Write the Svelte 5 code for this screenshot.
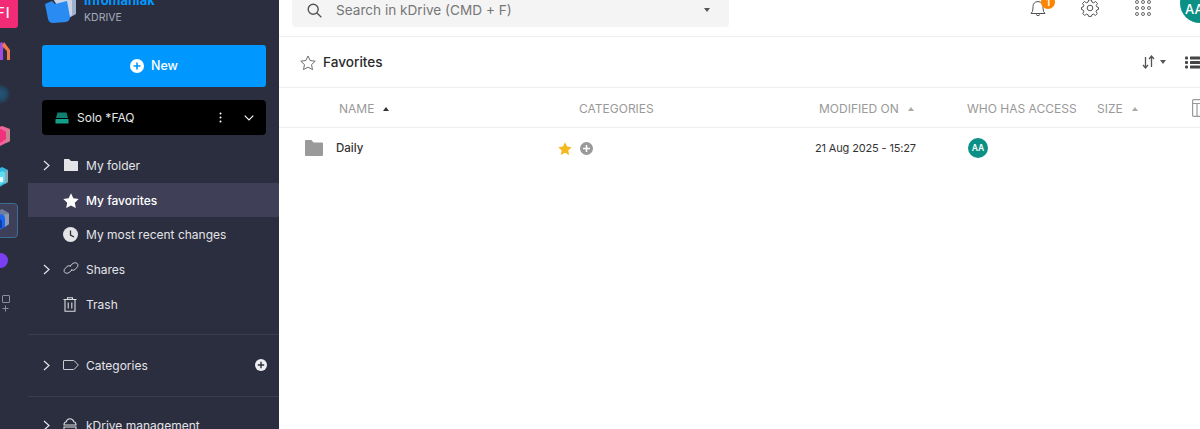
<script>
  const chevron = 'M1 1l5 4.5L1 10';
</script>

<div class="app">
  <nav class="rail">
    <div class="slot"><div class="tile">FI</div></div>
    <div class="slot">
      <svg class="home" width="24" height="24" viewBox="0 0 24 24">
        <path d="M3 7 L13 2 L15 5 L14 10 V20 H3Z" fill="#a04be0"/>
        <path d="M15 2 L21 10 V20 H18 V11 L13 6Z" fill="#f07a4b"/>
      </svg>
    </div>
    <div class="slot"><span class="globe"></span></div>
    <div class="slot">
      <svg width="20" height="20" viewBox="0 0 20 20">
        <path d="M-8 5 L4 0 L12 3 V15 L2 20 L-8 15Z" fill="#f2659a"/>
        <path d="M-8 6 L3 3 L8 6 V13 L2 17 L-8 13Z" fill="#f0317c"/>
        <path d="M8 3 L12 4 V15 L8 17Z" fill="#c9858f"/>
      </svg>
    </div>
    <div class="slot">
      <svg width="20" height="22" viewBox="0 0 20 22">
        <path d="M-8 6 L4 0 L10 3 V15 L0 21 L-8 16Z" fill="#34b8e0"/>
        <path d="M-8 8 L5 4 L7 6 V15 L0 19 L-8 15Z" fill="#5cdcf0"/>
        <path d="M1 10 H5 V15 H1Z" fill="#e8fbff"/>
        <path d="M7 4 L10 4 V15 L7 17Z" fill="#87a9b3"/>
      </svg>
    </div>
    <div class="slot">
      <div class="active-tile">
        <svg width="20" height="22" viewBox="0 0 20 22">
          <path d="M-8 6 L3 0 L10 4 V15 L0 21 L-8 16Z" fill="#6f7d9f"/>
          <path d="M-8 9 L3 5 L6 9 V18 L0 21 L-8 18Z" fill="#1b64f2"/>
          <path d="M-4 12 L1 10 L3 12 V19 H-4Z" fill="#0f3ea8"/>
          <path d="M6 5 L10 5 V15 L6 18Z" fill="#8d9ab5"/>
        </svg>
      </div>
    </div>
    <div class="slot purple-slot"><span class="purple"></span></div>
    <div class="adder">
      <span class="square"></span>
      <svg width="7" height="7" viewBox="0 0 7 7"><path d="M3.5 0.5V6.5M0.5 3.5H6.5" stroke="#8a8f9f" stroke-width="1"/></svg>
    </div>
  </nav>

  <aside class="side">
    <div class="brand">
      <svg class="brand-logo" width="31" height="34" viewBox="0 0 31 34">
        <path d="M9 6 L25 2 L31 5 V24 L24 28Z" fill="#9fb0cf"/>
        <path d="M7 7 L22 3 L27 5 V25 L20 29Z" fill="#cbd4e6"/>
        <path d="M0 14 L7 11 L10 14 L22 11 L25 27 Q25 31 21 32 L8 33 Q4 33 3 29Z" fill="#2a8bf2"/>
      </svg>
      <div class="brand-text">
        <div class="brand-name">Infomaniak</div>
        <div class="brand-sub">KDRIVE</div>
      </div>
    </div>

    <button class="new">
      <svg width="14" height="14" viewBox="0 0 14 14"><circle cx="7" cy="7" r="7" fill="#fff"/><path d="M7 3.5v7M3.5 7h7" stroke="#0098ff" stroke-width="1.6"/></svg>
      <span>New</span>
    </button>

    <div class="drive">
      <svg width="14" height="12" viewBox="0 0 14 12">
        <path d="M2.5 0.5H11.5L13 6H1Z" fill="#0f7f6f"/>
        <path d="M0.5 7H13.5V11.5H0.5Z" fill="#13a08b"/>
      </svg>
      <span class="drive-name">Solo *FAQ</span>
      <svg class="dots" width="3" height="11" viewBox="0 0 3 11" fill="#fff"><circle cx="1.5" cy="1.5" r="1"/><circle cx="1.5" cy="5.5" r="1"/><circle cx="1.5" cy="9.5" r="1"/></svg>
      <svg width="10" height="6" viewBox="0 0 10 6" fill="none"><path d="M0.7 0.7 5 5 9.3 0.7" stroke="#fff" stroke-width="1.1"/></svg>
    </div>

    <ul class="tree">
      <li class="item">
        <svg class="chev" width="7" height="11" viewBox="0 0 7 11" fill="none"><path d={chevron} stroke="#e6e6ea" stroke-width="1.2"/></svg>
        <svg class="ic" width="16" height="14" viewBox="0 0 16 14"><path d="M1 1.5Q1 1 1.5 1H6L8 3H14.5Q15 3 15 3.5V13H1Z" fill="#e4e4e7"/></svg>
        <span>My folder</span>
      </li>
      <li class="item on">
        <svg class="ic" width="16" height="15" viewBox="0 0 24 23"><path d="M12 0.5l3.6 7.6 8.2 1-6 5.8 1.6 8.2-7.4-4.1-7.4 4.1 1.6-8.2-6-5.8 8.2-1z" fill="#fff"/></svg>
        <span>My favorites</span>
      </li>
      <li class="item">
        <svg class="ic" width="15" height="15" viewBox="0 0 15 15"><circle cx="7.5" cy="7.5" r="7.5" fill="#e4e4e7"/><path d="M7.5 3.5V8L11 10" stroke="#2b2e3f" stroke-width="1.3" fill="none"/></svg>
        <span>My most recent changes</span>
      </li>
      <li class="item">
        <svg class="chev" width="7" height="11" viewBox="0 0 7 11" fill="none"><path d={chevron} stroke="#e6e6ea" stroke-width="1.2"/></svg>
        <svg class="ic" width="16" height="12" viewBox="0 0 16 12" fill="none" stroke="#c9cad0" stroke-width="1"><path d="M7 4 10 1.4Q11.6 0.2 13.6 1 15.6 2.4 14.7 4.5L12 7.6Q10 9 8.2 7.6"/><path d="M9 8 6 10.6Q4.4 11.8 2.4 11 0.4 9.6 1.3 7.5L4 4.4Q6 3 7.8 4.4"/></svg>
        <span>Shares</span>
      </li>
      <li class="item">
        <svg class="ic" width="14" height="15" viewBox="0 0 14 15" fill="none" stroke="#dcdce0" stroke-width="1.1"><path d="M0.5 2.5H13.5M4.5 2.5V0.8H9.5V2.5M2 2.5V14.2H12V2.5M5.2 5.5V11.5M8.8 5.5V11.5"/></svg>
        <span>Trash</span>
      </li>
    </ul>

    <div class="section">
      <div class="item">
        <svg class="chev" width="7" height="11" viewBox="0 0 7 11" fill="none"><path d={chevron} stroke="#e6e6ea" stroke-width="1.2"/></svg>
        <svg class="ic tag" width="16" height="10" viewBox="0 0 16 10" fill="none" stroke="#c9cad0" stroke-width="1"><path d="M0.5 1Q0.5 0.5 1 0.5H10.5Q11 0.5 11.5 1L15.3 5 11.5 9Q11 9.5 10.5 9.5H1Q0.5 9.5 0.5 9Z"/></svg>
        <span>Categories</span>
        <svg class="add" width="12" height="12" viewBox="0 0 12 12"><circle cx="6" cy="6" r="6" fill="#f0f0f2"/><path d="M6 2.8v6.4M2.8 6h6.4" stroke="#2b2e3f" stroke-width="1.4"/></svg>
      </div>
    </div>

    <div class="section last">
      <div class="item">
        <svg class="chev" width="7" height="11" viewBox="0 0 7 11" fill="none"><path d={chevron} stroke="#e6e6ea" stroke-width="1.2"/></svg>
        <svg class="ic" width="14" height="14" viewBox="0 0 14 14" fill="none" stroke="#dcdce0" stroke-width="1.1"><path d="M1 7Q1 4 3 4 4 0.8 7 0.8 10 0.8 11 4 13 4 13 7Z"/><path d="M1 9H13V13H1Z"/></svg>
        <span>kDrive management</span>
      </div>
    </div>
  </aside>

  <main class="main">
    <header class="top">
      <div class="search">
        <svg width="15" height="15" viewBox="0 0 15 15" fill="none" stroke="#555" stroke-width="1.4"><circle cx="6.2" cy="6.2" r="5"/><path d="M10 10l4.3 4.3"/></svg>
        <span class="search-text">Search in kDrive (CMD + F)</span>
        <span class="caret dark"></span>
      </div>
      <div class="actions">
        <div class="bell">
          <svg width="16" height="17" viewBox="0 0 16 17" fill="none" stroke="#555" stroke-width="1"><path d="M1 13.5Q3 12 3 8V6.5Q3 2 8 1.5 13 2 13 6.5V8Q13 12 15 13.5Z"/><path d="M6 14.5Q8 17 10 14.5"/></svg>
          <span class="badge">1</span>
        </div>
        <svg class="gear" width="18" height="18" viewBox="0 0 18 18" fill="none" stroke="#555" stroke-width="1"><circle cx="9" cy="9" r="2.8"/><path d="M7.6 0.8H10.4L10.9 3.1 12.6 3.8 14.6 2.5 16.5 4.5 15.2 6.4 15.9 8 17.5 8.5V10.5L15.8 11 15.1 12.7 16.3 14.6 14.4 16.4 12.5 15.1 10.9 15.8 10.4 17.4H7.6L7.1 15.8 5.5 15.1 3.6 16.4 1.7 14.6 2.9 12.7 2.2 11 0.5 10.5V8.5L2.1 8 2.8 6.4 1.5 4.5 3.4 2.5 5.4 3.8 7.1 3.1Z"/></svg>
        <div class="waffle">
          {#each Array(9) as _}<span></span>{/each}
        </div>
        <div class="me">AA</div>
      </div>
    </header>

    <div class="title-bar">
      <svg width="16" height="15" viewBox="0 0 24 23" fill="none" stroke="#555" stroke-width="1.3"><path d="M12 1.5l3.3 7 7.7 1-5.6 5.3 1.5 7.6-6.9-3.8-6.900 3.8 1.500-7.600L1 9.500l7.700-1z"/></svg>
      <h1>Favorites</h1>
      <div class="tools">
        <svg width="13" height="14" viewBox="0 0 13 14" fill="none" stroke="#555" stroke-width="1.3"><path d="M3.5 2V12.5M1 10l2.5 3L6 10M9.5 12V1.5M7 4l2.5-3L12 4"/></svg>
        <span class="caret dark"></span>
        <svg class="list" width="15" height="13" viewBox="0 0 15 13" fill="#444"><rect y="0.5" width="3" height="3" rx="1"/><rect x="5" y="0.5" width="10" height="3" rx="0.5"/><rect y="5" width="3" height="3" rx="1"/><rect x="5" y="5" width="10" height="3" rx="0.5"/><rect y="9.5" width="3" height="3" rx="1"/><rect x="5" y="9.5" width="10" height="3" rx="0.5"/></svg>
      </div>
    </div>

    <div class="thead">
      <span>NAME<i class="caret up dark"></i></span>
      <span>CATEGORIES</span>
      <span>MODIFIED ON<i class="caret up"></i></span>
      <span>WHO HAS ACCESS</span>
      <span>SIZE<i class="caret up"></i></span>
      <svg width="12" height="18" viewBox="0 0 12 18" fill="none" stroke="#999" stroke-width="1.2"><rect x="0.6" y="0.6" width="11" height="16.8" rx="1"/><path d="M0.6 4.5H11.6M5 4.5V17.4"/></svg>
    </div>

    <div class="row">
      <svg width="18" height="16" viewBox="0 0 18 16"><path d="M0 1Q0 0 1 0H6.5L8.5 2.5H17Q18 2.5 18 3.5V15Q18 16 17 16H1Q0 16 0 15Z" fill="#9a9a9a"/></svg>
      <span class="file">Daily</span>
      <div class="cats">
        <svg width="14" height="13" viewBox="0 0 24 23"><path d="M12 0.5l3.6 7.6 8.2 1-6 5.8 1.6 8.2-7.4-4.1-7.4 4.1 1.6-8.2-6-5.8 8.2-1z" fill="#f5b81f"/></svg>
        <svg width="13" height="13" viewBox="0 0 13 13"><circle cx="6.5" cy="6.5" r="6.5" fill="#999"/><path d="M6.5 3v7M3 6.5h7" stroke="#fff" stroke-width="1.5"/></svg>
      </div>
      <span class="date">21 Aug 2025 - 15:27</span>
      <span class="avatar">AA</span>
    </div>
  </main>
</div>

<style>
  :global(body) { margin: 0; overflow: hidden; background: #fff; }
  * { box-sizing: border-box; }
  .app {
    display: flex;
    height: 442px;
    margin-top: -13px;
    font-family: Inter, "Liberation Sans", sans-serif;
    overflow: hidden;
  }

  .rail {
    width: 28px;
    flex: none;
    background: #2b2e3f;
    overflow: hidden;
    padding-top: 2px;
  }
  .slot {
    width: 36px;
    height: 42px;
    margin-left: -18px;
    display: flex;
    align-items: center;
    justify-content: center;
  }
  .slot > svg { margin-left: 16px; overflow: visible; flex: none; }
  .slot > svg.home { margin-left: 2px; }
  .tile {
    width: 36px;
    height: 36px;
    flex: none;
    background: #f22b77;
    border-radius: 3px;
    color: #fff;
    font-size: 14px;
    font-weight: 500;
    display: flex;
    align-items: flex-end;
    justify-content: center;
    padding: 0 0 7px 7px;
    letter-spacing: 1px;
  }
  .globe {
    width: 18px;
    height: 18px;
    flex: none;
    border-radius: 50%;
    background: radial-gradient(circle at 55% 50%, #25587a, #223f58 70%, #2b2e3f);
    filter: blur(1px);
  }
  .active-tile {
    width: 36px;
    height: 35px;
    flex: none;
    border: 1px solid #3f6c95;
    border-radius: 4px;
    background: #3e3f58;
    display: flex;
    align-items: center;
    justify-content: center;
  }
  .active-tile svg { margin-left: 18px; overflow: visible; flex: none; }
  .purple-slot { margin-top: -2px; }
  .purple {
    width: 15px;
    height: 15px;
    flex: none;
    border-radius: 50%;
    background: #7a3ff2;
  }
  .adder {
    width: 11px;
    margin-top: 14px;
    display: flex;
    flex-direction: column;
    align-items: center;
  }
  .square {
    width: 8px;
    height: 8px;
    border: 1px solid #8a8f9f;
    margin-bottom: 2px;
    border-radius: 1px;
  }

  .side {
    width: 251px;
    flex: none;
    background: #2b2e3f;
    color: #e4e4e7;
    font-size: 12px;
  }
  .brand {
    height: 58px;
    padding: 4px 0 0 17px;
    display: flex;
    gap: 8px;
    overflow: hidden;
  }
  .brand-logo { flex: none; margin-top: -1px; }
  .brand-name {
    color: #0098ff;
    font-size: 13px;
    font-weight: 700;
    line-height: 18px;
  }
  .brand-sub {
    color: #a5afbd;
    font-size: 10.5px;
    line-height: 14px;
    margin-top: 2px;
  }
  .new {
    display: flex;
    align-items: center;
    justify-content: center;
    gap: 7px;
    width: 224px;
    height: 42px;
    margin: 0 0 13px 14px;
    padding: 0 0 1px;
    background: #0098ff;
    color: #fff;
    border: 0;
    border-radius: 3px;
    font: 500 12.5px Inter, "Liberation Sans", sans-serif;
  }
  .drive {
    display: flex;
    align-items: center;
    width: 224px;
    height: 35px;
    margin-left: 14px;
    padding: 0 12px 0 13px;
    background: #000;
    border-radius: 4px;
    color: #e8e8e8;
  }
  .drive-name { margin: 0 0 1px 8px; flex: 1; }
  .dots { margin-right: 22px; }
  .tree { list-style: none; margin: 13px 0 0; padding: 0 0 13px; border-bottom: 1px solid #3a3d50; }
  .item {
    position: relative;
    display: flex;
    align-items: center;
    height: 34.7px;
    padding-left: 58px;
  }
  .item.on { background: #3f3f58; color: #fff; font-weight: 500; }
  .chev { position: absolute; left: 15px; top: 12px; }
  .ic { position: absolute; left: 35px; top: 10px; }
  .ic.tag { top: 12px; }
  .section { border-bottom: 1px solid #3a3d50; padding: 13px 0 13px; }
  .section.last { border-bottom: 0; padding: 11px 0 0; }
  .add { position: absolute; left: 227px; top: 11px; }

  .main { flex: 1; min-width: 0; background: #fff; overflow: hidden; color: #333; }
  .top {
    display: flex;
    align-items: flex-start;
    height: 50px;
    border-bottom: 1px solid #eee;
    padding-left: 13px;
  }
  .search {
    display: flex;
    align-items: center;
    flex: none;
    width: 437px;
    height: 40px;
    padding: 6px 19px 0 15px;
    background: #f4f4f4;
    border-radius: 4px;
    color: #777;
    font-size: 13.6px;
  }
  .search-text { flex: 1; margin-left: 14px; }
  .actions { display: flex; align-items: center; flex: none; margin-left: 301px; height: 42px; }
  .bell { position: relative; width: 16px; height: 17px; flex: none; }
  .badge {
    position: absolute;
    left: 11px;
    top: -5px;
    width: 14px;
    height: 14px;
    border-radius: 50%;
    background: #ff8500;
    color: #fff;
    font-size: 10px;
    font-weight: 600;
    text-align: center;
    line-height: 14px;
  }
  .gear { margin-left: 35px; flex: none; }
  .waffle {
    margin-left: 36px;
    display: grid;
    grid-template-columns: repeat(3, 4px);
    gap: 2px;
    flex: none;
  }
  .waffle span { width: 4px; height: 4px; border: 1px solid #666; border-radius: 50%; }
  .me {
    margin: -10px 0 0 29px;
    width: 40px;
    height: 40px;
    flex: none;
    border-radius: 50%;
    background: #0a9085;
    color: #fff;
    font-size: 13px;
    font-weight: 500;
    display: flex;
    align-items: center;
    padding: 11px 0 0 5px;
  }

  .title-bar {
    display: flex;
    align-items: center;
    height: 51px;
    padding-left: 21px;
    border-bottom: 1px solid #eee;
  }
  h1 { margin: 0 0 0 7px; font-size: 13.6px; font-weight: 500; color: #2b2b2b; }
  .tools { margin-left: auto; display: flex; align-items: center; }
  .tools .caret { margin-left: 5px; }
  .list { margin-left: 19px; flex: none; }

  .thead {
    display: grid;
    grid-template-columns: 240px 240px 148px 130px 95px 12px;
    align-items: center;
    height: 40px;
    padding: 1px 0 0 60px;
    border-bottom: 1px solid #eee;
    color: #999;
    font-size: 12px;
    white-space: nowrap;
  }
  .caret {
    display: inline-block;
    flex: none;
    width: 0;
    height: 0;
    border-left: 3.5px solid transparent;
    border-right: 3.5px solid transparent;
    border-top: 4px solid #999;
    vertical-align: middle;
  }
  .caret.dark { border-top-color: #555; }
  .caret.up {
    margin-left: 9px;
    border-top: 0;
    border-bottom: 4px solid #aaa;
  }
  .caret.up.dark { border-bottom-color: #333; }

  .row {
    display: grid;
    grid-template-columns: 31px 222px 257px 153px auto;
    align-items: center;
    height: 40px;
    padding-left: 26px;
    font-size: 11px;
  }
  .file { font-weight: 500; font-size: 11.5px; color: #333; }
  .cats { display: flex; align-items: center; gap: 8px; }
  .date { color: #333; letter-spacing: -0.15px; }
  .avatar {
    width: 20px;
    height: 20px;
    border-radius: 50%;
    background: #0a9085;
    color: #fff;
    font-size: 8.5px;
    font-weight: 600;
    display: flex;
    align-items: center;
    justify-content: center;
  }
</style>
